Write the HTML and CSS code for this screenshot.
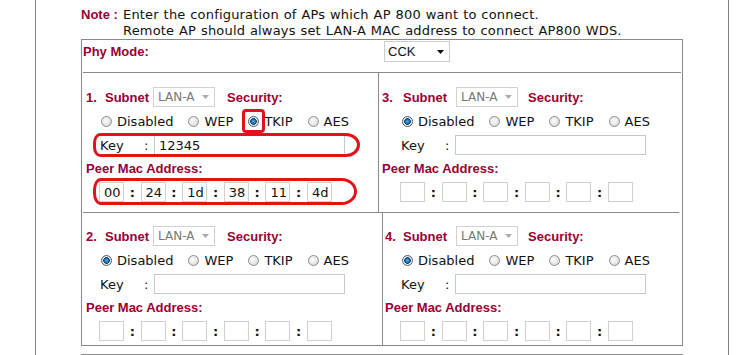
FILE: index.html
```html
<!DOCTYPE html>
<html lang="en">

<head>
    <meta charset="UTF-8">
    <meta name="viewport" content="width=device-width, initial-scale=1.0">
    <title>WDS Settings</title>
    <link rel="stylesheet" href="styles.css">
</head>

<body>
    <div class="frame">
        <div class="note">
            <span class="note-label">Note :</span>
            <div class="note-text">Enter the configuration of APs which AP 800 want to connect.<br>Remote AP should always set LAN-A MAC address to connect AP800 WDS.</div>
        </div>

        <div class="box">
            <div class="phy">
                <span class="label phy-label">Phy Mode:</span>
                <div class="phy-select">CCK
                    <svg width="7" height="4" viewBox="0 0 7 4"><path d="M0 0h7L3.5 4z" fill="#111"/></svg>
                </div>
            </div>
            <div class="rule"></div>

            <!--AP 1 and AP 3-->
            <div class="row row-top">
                <div class="cell left">
                    <div class="line">
                        <span class="label num">1.</span><span class="label">Subnet</span>
                        <div class="subnet">LAN-A <svg width="7" height="4" viewBox="0 0 7 4"><path d="M0 0h7L3.5 4z" fill="#aaa"/></svg></div>
                        <span class="label sec">Security:</span>
                    </div>
                    <div class="line inset">
                        <label class="opt"><input type="radio" name="sec1">Disabled</label>
                        <label class="opt"><input type="radio" name="sec1">WEP</label>
                        <label class="opt"><span class="ring"><input type="radio" name="sec1" checked></span>TKIP</label>
                        <label class="opt"><input type="radio" name="sec1">AES</label>
                    </div>
                    <div class="line inset">
                        <div class="key marked">
                            <span class="key-label">Key</span><span class="colon">:</span><input class="key-input" value="12345">
                        </div>
                    </div>
                    <div class="line peer"><span class="label">Peer Mac Address:</span></div>
                    <div class="line inset">
                        <div class="mac marked">
                            <input class="mac-box" value="00"><span class="mac-sep">:</span>
                            <input class="mac-box" value="24"><span class="mac-sep">:</span>
                            <input class="mac-box" value="1d"><span class="mac-sep">:</span>
                            <input class="mac-box" value="38"><span class="mac-sep">:</span>
                            <input class="mac-box" value="11"><span class="mac-sep">:</span>
                            <input class="mac-box" value="4d">
                        </div>
                    </div>
                </div>

                <div class="cell right-a">
                    <div class="line">
                        <span class="label num">3.</span><span class="label">Subnet</span>
                        <div class="subnet">LAN-A <svg width="7" height="4" viewBox="0 0 7 4"><path d="M0 0h7L3.5 4z" fill="#aaa"/></svg></div>
                        <span class="label sec">Security:</span>
                    </div>
                    <div class="line inset">
                        <label class="opt"><input type="radio" name="sec3" checked>Disabled</label>
                        <label class="opt"><input type="radio" name="sec3">WEP</label>
                        <label class="opt"><input type="radio" name="sec3">TKIP</label>
                        <label class="opt"><input type="radio" name="sec3">AES</label>
                    </div>
                    <div class="line inset">
                        <div class="key">
                            <span class="key-label">Key</span><span class="colon">:</span><input class="key-input">
                        </div>
                    </div>
                    <div class="line peer"><span class="label">Peer Mac Address:</span></div>
                    <div class="line inset">
                        <div class="mac">
                            <input class="mac-box"><span class="mac-sep">:</span>
                            <input class="mac-box"><span class="mac-sep">:</span>
                            <input class="mac-box"><span class="mac-sep">:</span>
                            <input class="mac-box"><span class="mac-sep">:</span>
                            <input class="mac-box"><span class="mac-sep">:</span>
                            <input class="mac-box">
                        </div>
                    </div>
                </div>
            </div>

            <div class="rule rule-mid"></div>

            <!--AP 2 and AP 4-->
            <div class="row row-bottom">
                <div class="cell left">
                    <div class="line">
                        <span class="label num">2.</span><span class="label">Subnet</span>
                        <div class="subnet">LAN-A <svg width="7" height="4" viewBox="0 0 7 4"><path d="M0 0h7L3.5 4z" fill="#aaa"/></svg></div>
                        <span class="label sec">Security:</span>
                    </div>
                    <div class="line inset">
                        <label class="opt"><input type="radio" name="sec2" checked>Disabled</label>
                        <label class="opt"><input type="radio" name="sec2">WEP</label>
                        <label class="opt"><input type="radio" name="sec2">TKIP</label>
                        <label class="opt"><input type="radio" name="sec2">AES</label>
                    </div>
                    <div class="line inset">
                        <div class="key">
                            <span class="key-label">Key</span><span class="colon">:</span><input class="key-input">
                        </div>
                    </div>
                    <div class="line peer"><span class="label">Peer Mac Address:</span></div>
                    <div class="line inset">
                        <div class="mac">
                            <input class="mac-box"><span class="mac-sep">:</span>
                            <input class="mac-box"><span class="mac-sep">:</span>
                            <input class="mac-box"><span class="mac-sep">:</span>
                            <input class="mac-box"><span class="mac-sep">:</span>
                            <input class="mac-box"><span class="mac-sep">:</span>
                            <input class="mac-box">
                        </div>
                    </div>
                </div>

                <div class="cell right-b">
                    <div class="line">
                        <span class="label num">4.</span><span class="label">Subnet</span>
                        <div class="subnet">LAN-A <svg width="7" height="4" viewBox="0 0 7 4"><path d="M0 0h7L3.5 4z" fill="#aaa"/></svg></div>
                        <span class="label sec">Security:</span>
                    </div>
                    <div class="line inset">
                        <label class="opt"><input type="radio" name="sec4" checked>Disabled</label>
                        <label class="opt"><input type="radio" name="sec4">WEP</label>
                        <label class="opt"><input type="radio" name="sec4">TKIP</label>
                        <label class="opt"><input type="radio" name="sec4">AES</label>
                    </div>
                    <div class="line inset">
                        <div class="key">
                            <span class="key-label">Key</span><span class="colon">:</span><input class="key-input">
                        </div>
                    </div>
                    <div class="line peer"><span class="label">Peer Mac Address:</span></div>
                    <div class="line inset">
                        <div class="mac">
                            <input class="mac-box"><span class="mac-sep">:</span>
                            <input class="mac-box"><span class="mac-sep">:</span>
                            <input class="mac-box"><span class="mac-sep">:</span>
                            <input class="mac-box"><span class="mac-sep">:</span>
                            <input class="mac-box"><span class="mac-sep">:</span>
                            <input class="mac-box">
                        </div>
                    </div>
                </div>
            </div>
        </div>

        <div class="box box-next"></div>
    </div>
</body>

</html>
```

FILE: styles.css
```css
/*General*/
* {
    margin: 0;
    padding: 0;
    box-sizing: border-box;
}

body {
    font-family: 'DejaVu Sans', Verdana, sans-serif;
    font-size: 13px;
    color: #111;
    background-color: #fff;
}

input {
    font-family: inherit;
    font-size: 13px;
    color: #111;
    outline: none;
}

/*Frame*/
.frame {
    margin-left: 35px;
    width: 694px;
    min-height: 355px;
    border-left: 1px solid #808080;
    border-right: 1px solid #808080;
    padding-left: 45px;
}

.label {
    font-family: 'Liberation Sans', Arial, sans-serif;
    font-weight: bold;
    font-size: 13px;
    color: #990033;
}

/*Note*/
.note {
    display: flex;
    flex-direction: row;
    padding-top: 7px;
    line-height: 16px;
}

.note-label {
    width: 42px;
    font-family: 'Liberation Sans', Arial, sans-serif;
    font-weight: bold;
    color: #990033;
}

.note-text {
    letter-spacing: 0.18px;
    word-spacing: 0.5px;
    white-space: nowrap;
}

/*Box*/
.box {
    width: 602px;
    border: 1px solid #8a8a8a;
}

.box-next {
    margin-top: 8px;
    height: 40px;
}

.rule {
    height: 1px;
    margin: 0 1px;
    background-color: #8a8a8a;
}

.rule-mid {
    margin: 0 3px 0 1px;
}

/*Phy mode*/
.phy {
    display: flex;
    flex-direction: row;
    align-items: flex-start;
    height: 32px;
    padding: 1px 0 0 1px;
}

.phy-label {
    width: 301px;
    line-height: 21px;
}

.phy-select {
    display: flex;
    align-items: center;
    justify-content: space-between;
    width: 66px;
    height: 21px;
    padding: 0 5px 0 3px;
    border: 1px solid #cdcdcd;
    font-family: 'Liberation Sans', Arial, sans-serif;
    font-size: 13px;
}

/*Rows*/
.row {
    display: grid;
}

.row-top {
    grid-template-columns: 297px 303px;
}

.row-top .cell {
    padding-top: 12px;
    padding-bottom: 8px;
}

.row-top .left {
    border-right: 1px solid #8a8a8a;
}

.row-bottom {
    grid-template-columns: 300px 300px;
}

.row-bottom .cell {
    padding-top: 11px;
    padding-bottom: 2px;
}

.row-bottom .right-b {
    border-left: 1px solid #8a8a8a;
}

/*Cell*/
.cell.left {
    padding-left: 4px;
}

.cell.right-a {
    padding-left: 3px;
}

.cell.right-b {
    padding-left: 2px;
}

.line {
    display: flex;
    flex-direction: row;
    align-items: center;
    height: 24px;
}

.line.peer {
    height: 23px;
}

.left .inset {
    padding-left: 14px;
}

.right-a .inset {
    padding-left: 19px;
}

.right-b .inset {
    padding-left: 16px;
}

/*Subnet*/
.num {
    width: 19px;
}

.right-a .num {
    width: 21px;
}

.right-b .num {
    width: 18px;
}

.subnet {
    display: flex;
    align-items: center;
    justify-content: space-between;
    width: 62px;
    height: 20px;
    margin-left: 4px;
    padding: 0 5px 0 4px;
    border: 1px solid #d2d2d2;
    font-size: 12px;
    color: #777;
}

.right-a .subnet,
.right-b .subnet {
    margin-left: 9px;
}

.sec {
    margin-left: 12px;
}

.right-a .sec,
.right-b .sec {
    margin-left: 10px;
}

/*Radios*/
.opt {
    display: flex;
    align-items: center;
    margin-right: 15px;
}

.opt:first-child {
    margin-left: 1px;
}

.opt input,
.ring {
    flex: none;
}

.opt input {
    appearance: none;
    -webkit-appearance: none;
    display: block;
    width: 11px;
    height: 11px;
    margin-right: 5px;
    border: 1px solid #8d8d8d;
    border-radius: 50%;
    background: radial-gradient(circle at 40% 40%, #fdfdfd 0, #e4e4e4 60%, #c8c8c8 100%);
}

.opt input:checked {
    border-color: #4d5d6c;
    background: radial-gradient(circle, #49b4f0 0, #1c6fb5 2px, #123b63 3px, #e8eef3 3.6px, #d4d8dc 100%);
}

.ring {
    position: relative;
    display: block;
}

.ring::after {
    content: '';
    position: absolute;
    top: -7px;
    left: -6px;
    right: -1px;
    bottom: -6px;
    border: 3px solid #e2121c;
    border-radius: 4px;
    pointer-events: none;
}

/*Key*/
.key {
    display: flex;
    align-items: center;
    position: relative;
}

.key-label {
    width: 44px;
}

.colon {
    width: 10px;
}

.key-input {
    width: 191px;
    height: 20px;
    padding-left: 4px;
    border: 1px solid #c8c8c8;
}

/*Mac*/
.mac {
    display: flex;
    align-items: center;
    margin-left: -1px;
    position: relative;
}

.mac-box {
    width: 25px;
    height: 20px;
    padding-left: 4px;
    border: 1px solid #d0d0d0;
}

.mac-sep {
    width: 16.6px;
    text-align: center;
    font-weight: bold;
}

/*Red markers*/
.key.marked::after,
.mac.marked::after {
    content: '';
    position: absolute;
    border: 3px solid #e2121c;
    pointer-events: none;
}

.key.marked::after {
    top: -2px;
    bottom: -2px;
    left: -7px;
    right: -15px;
    border-radius: 7px 14px 14px 7px / 10px 12px 12px 10px;
}

.mac.marked::after {
    top: -4px;
    bottom: -3px;
    left: -6px;
    right: -25px;
    border-radius: 8px 16px 16px 8px / 12px 14px 14px 12px;
}
```
